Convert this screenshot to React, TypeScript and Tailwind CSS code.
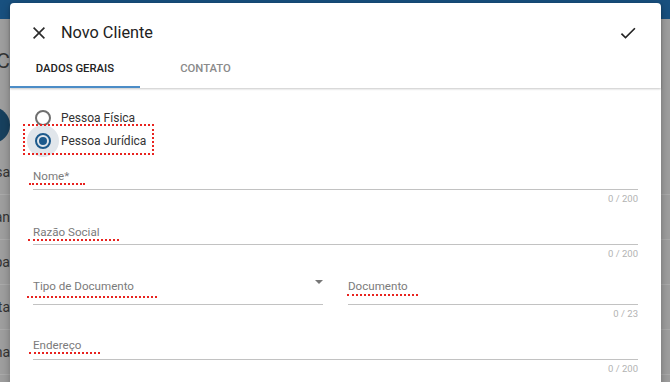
import React from 'react';

const bgRows = ['Empresa', 'Plan', 'Etapa', 'Lista', 'Semana', 'Pag'];

type FieldProps = {
  label: string;
  counter?: string;
  markLeft: number;
  markWidth: number;
  markMt: string;
  lineMt: string;
  select?: boolean;
  className?: string;
};

function Field({ label, counter, markLeft, markWidth, markMt, lineMt, select, className }: FieldProps) {
  return (
    <div className={`flex flex-col ${className ?? ''}`}>
      <div className="flex items-start justify-between h-[14px]">
        <span className="text-[11.6px] leading-[14px] text-[#7b7b7b]">{label}</span>
        {select && (
          <svg width="8" height="4" viewBox="0 0 8 4" className="mt-[1px]">
            <path d="M0 0h8L4 4z" fill="#777" />
          </svg>
        )}
      </div>
      {/* spellcheck-like mark */}
      <div
        className={`h-[2px] border-b-2 border-dotted border-[#e8231f] ${markMt}`}
        style={{ marginLeft: markLeft, width: markWidth }}
      />
      <div className={`h-px bg-[#c2c2c2] ${lineMt}`} />
      {counter && (
        <div className="mt-[3px] text-right text-[9.5px] leading-[12px] text-[#b3b3b3]">{counter}</div>
      )}
    </div>
  );
}

function Radio({ checked }: { checked?: boolean }) {
  return (
    <span className="relative w-4 h-4 shrink-0">
      {checked && <span className="absolute -inset-2 rounded-full bg-[#e1e6eb]" />}
      <span
        className={`absolute inset-0 rounded-full border-2 ${checked ? 'border-[#1d5a8c]' : 'border-[#6f6f6f]'}`}
      />
      {checked && <span className="absolute inset-[4px] rounded-full bg-[#1d5a8c]" />}
    </span>
  );
}

export default function App() {
  return (
    <div className="relative w-[670px] h-[382px] overflow-hidden bg-[#9e9e9e] font-['Roboto',sans-serif]">
      {/* background page under the overlay */}
      <div className="h-[19px] bg-[#18507f]" />
      <div className="h-[101px] relative">
        <div className="flex justify-end w-[10px] overflow-hidden whitespace-nowrap mt-[30px] text-[21px] leading-[24px] text-[#353535]">
          C
        </div>
        <div className="absolute left-[-26px] top-[58px] w-[36px] h-[36px] rounded-full bg-[#17405e]" />
      </div>
      {bgRows.map((r) => (
        <div key={r} className="h-[45px] flex items-center border-b border-[#aaaaaa]">
          <div className="flex justify-end w-[10px] overflow-hidden whitespace-nowrap text-[14px] text-[#333]">{r}</div>
        </div>
      ))}

      {/* dialog */}
      <div className="absolute left-[10px] top-[3px] w-[651px] h-[400px] bg-white rounded-t-[4px] shadow-[0_2px_8px_rgba(0,0,0,0.3)]">
        <div className="relative z-10 shadow-[0_1px_2px_rgba(0,0,0,0.22)] pt-[10px]">
          <div className="flex items-center h-[40px] pl-[23px] pr-[23px]">
            <svg width="12" height="12" viewBox="0 0 12 12" className="shrink-0">
              <path d="M0.6 0.6L11.4 11.4M11.4 0.6L0.6 11.4" stroke="#2a2a2a" strokeWidth="1.6" />
            </svg>
            <span className="ml-[16px] text-[16.3px] text-[#222]">Novo Cliente</span>
            <svg width="20" height="20" viewBox="0 0 24 24" className="ml-auto">
              <path d="M9 16.17L4.83 12l-1.42 1.41L9 19 21 7l-1.41-1.41z" fill="#222" />
            </svg>
          </div>
          <div className="flex">
            <div className="w-[130px] h-[35px] flex items-center justify-center pb-[1px] border-b-2 border-[#4c8dc7] text-[11.3px] font-medium text-[#222]">
              DADOS GERAIS
            </div>
            <div className="w-[131px] h-[35px] flex items-center justify-center pb-[1px] border-b-2 border-transparent text-[11.3px] font-medium text-[#8a8a8a]">
              CONTATO
            </div>
          </div>
        </div>

        <div className="px-[23px] pt-[18px]">
          <div className="flex flex-col">
            <div className="flex items-center h-[23px] pl-[2px]">
              <Radio />
              <span className="ml-[10px] text-[12px] text-[#333]">Pessoa Física</span>
            </div>
            <div className="relative flex items-center h-[23px] pl-[2px] w-fit">
              <Radio checked />
              <span className="relative ml-[10px] text-[12px] text-[#333]">Pessoa Jurídica</span>
              <span className="absolute left-[-10px] top-[-5px] w-[131px] h-[31px] border-2 border-dotted border-[#e8231f]" />
            </div>
          </div>

          <Field label="Nome*" counter="0 / 200" markLeft={-4} markWidth={56} markMt="mt-0" lineMt="mt-[4px]" className="mt-[17px]" />
          <Field label="Razão Social" counter="0 / 200" markLeft={-5} markWidth={91} markMt="mt-0" lineMt="mt-[3px]" className="mt-[20px]" />
          <div className="grid grid-cols-2 gap-[25px] mt-[19px] items-start">
            <Field label="Tipo de Documento" select markLeft={-6} markWidth={130} markMt="mt-[3px]" lineMt="mt-[6px]" />
            <Field label="Documento" counter="0 / 23" markLeft={-1} markWidth={71} markMt="mt-[1px]" lineMt="mt-[8px]" />
          </div>
          <Field label="Endereço" counter="0 / 200" markLeft={-4} markWidth={71} markMt="mt-0" lineMt="mt-[5px]" className="mt-[18px]" />
        </div>
      </div>
    </div>
  );
}
